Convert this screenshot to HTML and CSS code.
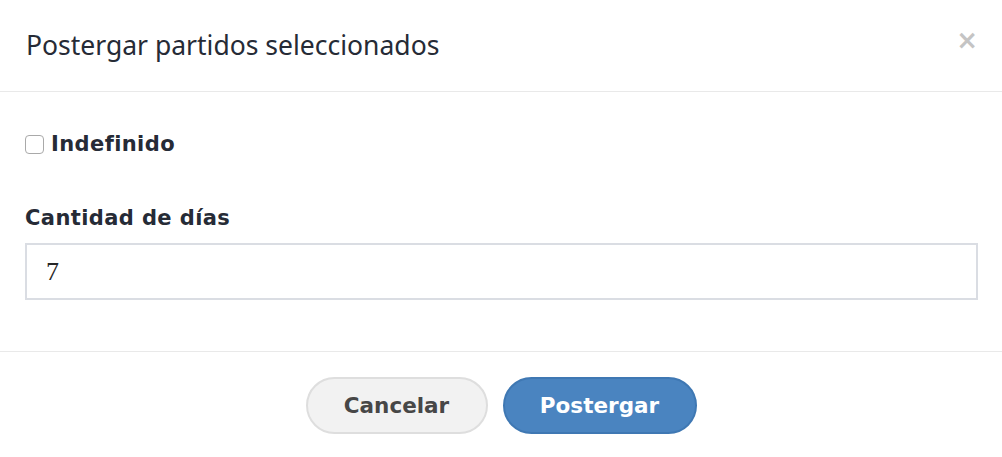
FILE: index.html
```html
<!DOCTYPE html>
<html lang="es">
<head>
<meta charset="utf-8">
<title>Postergar partidos seleccionados</title>
<link rel="stylesheet" href="styles.css">
</head>
<body>
<div class="modal">
  <div class="modal-header">
    <h4 class="modal-title">Postergar partidos seleccionados</h4>
    <button class="close" type="button">×</button>
  </div>
  <div class="modal-body">
    <label class="check-row"><input type="checkbox" class="check"><span>Indefinido</span></label>
    <div class="field">
      <label class="field-label">Cantidad de días</label>
      <input class="text-input" type="text" value="7">
    </div>
  </div>
  <div class="modal-footer">
    <button class="btn btn-default" type="button">Cancelar</button>
    <button class="btn btn-primary" type="button">Postergar</button>
  </div>
</div>
</body>
</html>
```
FILE: styles.css
```css
html, body { margin: 0; padding: 0; background: #fff; }
body { font-family: "DejaVu Sans", sans-serif; color: #2a2e3a; }
.modal { width: 1002px; height: 457px; display: flex; flex-direction: column; }
.modal-header {
  height: 92px; box-sizing: border-box; border-bottom: 1px solid #e9e9e9;
  display: flex; align-items: center; justify-content: space-between;
  padding: 0 24px 0 26px;
}
.modal-title {
  margin: 0; font-family: "Noto Sans", sans-serif; font-weight: 400;
  font-size: 26.5px; color: #262b36; letter-spacing: 0; padding-bottom: 2px;
}
.close {
  border: 0; background: none; padding: 0; margin-top: -12px; margin-right: 0;
  font-family: "DejaVu Sans", sans-serif; font-weight: bold; font-size: 26px;
  color: #c4c4c4; line-height: 1; cursor: pointer;
}
.modal-body { padding: 0 24px 0 25px; height: 260px; box-sizing: border-box; border-bottom: 1px solid #e9e9e9; }
.check-row { display: flex; align-items: center; margin-top: 42px; height: 20px; gap: 7px; }
.check {
  appearance: none; -webkit-appearance: none; margin: 0; width: 19px; height: 19px;
  border: 1px solid #a9a9a9; border-radius: 4px; background: #fff; box-sizing: border-box;
}
.check-row span, .field-label {
  font-family: "DejaVu Sans", sans-serif; font-weight: bold; font-size: 21px; color: #262b36;
  letter-spacing: 0.4px;
}
.field { margin-top: 52px; display: flex; flex-direction: column; }
.field-label { line-height: 24px; }
.text-input {
  margin-top: 13px; height: 57px; width: 953px; box-sizing: border-box;
  border: 2px solid #dadde3; padding: 0 19px; font-family: "Liberation Serif", serif;
  font-size: 26px; color: #262626; outline: none;
}
.modal-footer { flex: 1; display: flex; justify-content: center; align-items: flex-start; gap: 15px; padding-top: 25px; }
.btn {
  height: 57px; border-radius: 29px; font-family: "DejaVu Sans", sans-serif; font-weight: bold;
  font-size: 21.5px; padding: 0; cursor: pointer; box-sizing: border-box;
}
.btn-default { width: 182px; background: #f2f2f2; border: 2px solid #dedede; color: #474747; }
.btn-primary { width: 194px; background: #4a84c0; border: 2px solid #3f78b3; color: #fff; }
```
